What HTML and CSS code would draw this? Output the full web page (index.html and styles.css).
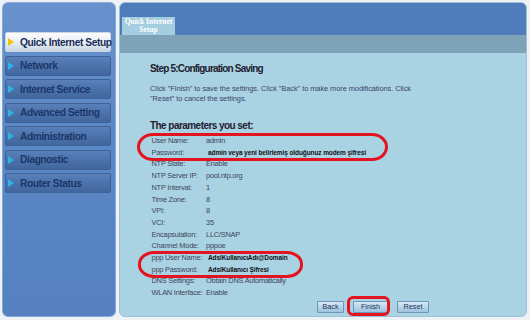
FILE: index.html
```html
<!DOCTYPE html>
<html>
<head>
<meta charset="utf-8">
<link rel="stylesheet" href="styles.css">
</head>
<body>
<div class="page">
  <nav class="sidebar">
    <ul class="menu">
      <li class="item active"><span class="arrow"></span>Quick Internet Setup</li>
      <li class="item"><span class="arrow"></span>Network</li>
      <li class="item"><span class="arrow"></span>Internet Service</li>
      <li class="item"><span class="arrow"></span>Advanced Setting</li>
      <li class="item"><span class="arrow"></span>Administration</li>
      <li class="item"><span class="arrow"></span>Diagnostic</li>
      <li class="item"><span class="arrow"></span>Router Status</li>
    </ul>
  </nav>
  <main class="panel">
    <div class="panel-head">
      <div class="tab">Quick Internet<br>Setup</div>
    </div>
    <div class="band"></div>
    <div class="content">
      <h1 class="title">Step 5:Configuration Saving</h1>
      <p class="intro">Click "Finish" to save the settings. Click "Back" to make more modifications. Click<br>"Reset" to cancel the settings.</p>
      <h2 class="subtitle">The parameters you set:</h2>
      <div class="params">
        <div class="row"><span class="label">User Name:</span><span class="value">admin</span></div>
        <div class="row"><span class="label">Password:</span><span class="value edit">admin veya yeni belirlemiş olduğunuz modem şifresi</span></div>
        <div class="row"><span class="label">NTP State:</span><span class="value">Enable</span></div>
        <div class="row"><span class="label">NTP Server IP:</span><span class="value">pool.ntp.org</span></div>
        <div class="row"><span class="label">NTP Interval:</span><span class="value">1</span></div>
        <div class="row"><span class="label">Time Zone:</span><span class="value">8</span></div>
        <div class="row"><span class="label">VPI:</span><span class="value">8</span></div>
        <div class="row"><span class="label">VCI:</span><span class="value">35</span></div>
        <div class="row"><span class="label">Encapsulation:</span><span class="value">LLC/SNAP</span></div>
        <div class="row"><span class="label">Channel Mode:</span><span class="value">pppoe</span></div>
        <div class="row"><span class="label">ppp User Name:</span><span class="value edit">AdslKullanıcıAdı@Domain</span></div>
        <div class="row"><span class="label">ppp Password:</span><span class="value edit">AdslKullanıcı Şifresi</span></div>
        <div class="row"><span class="label">DNS Settings:</span><span class="value">Obtain DNS Automatically</span></div>
        <div class="row"><span class="label">WLAN Interface:</span><span class="value">Enable</span></div>
      </div>
      <div class="buttons">
        <button class="btn btn-back">Back</button>
        <button class="btn btn-finish">Finish</button>
        <button class="btn btn-reset">Reset</button>
      </div>
    </div>
    <div class="mark mark-pass"></div>
    <div class="mark mark-ppp"></div>
    <div class="mark mark-finish"></div>
  </main>
</div>
</body>
</html>
```

FILE: styles.css
```css
* { box-sizing: border-box; }

body {
  margin: 0;
  background: #eef2f5;
  font-family: "Liberation Sans", Arial, sans-serif;
}

.page {
  display: flex;
  gap: 3px;
  padding: 2px 3px 3px 2px;
  height: 320px;
}

/* Sidebar */
.sidebar {
  width: 114px;
  border-radius: 6px;
  border: 1px solid #86aad8;
  background: linear-gradient(180deg, #6792cd 0%, #5a87c5 40%, #5581c0 100%);
  padding: 29px 4px 0 2px;
}

.menu {
  list-style: none;
  margin: 0;
  padding: 0;
  display: flex;
  flex-direction: column;
  gap: 3.5px;
}

.item {
  height: 20px;
  display: flex;
  align-items: center;
  gap: 6px;
  padding-left: 2px;
  border-radius: 2px;
  border: 1px solid #3e6197;
  background: linear-gradient(180deg, #5a80ba 0%, #4b72aa 50%, #42679e 100%);
  color: #1b376a;
  font-weight: bold;
  font-size: 10.2px;
  letter-spacing: -0.4px;
  white-space: nowrap;
}

.item.active {
  border-color: #c9d6e4;
  background: linear-gradient(180deg, #fbfcfd 0%, #e6edf4 55%, #c8d5e3 100%);
  color: #1a2d58;
}

.arrow {
  flex: none;
  width: 0;
  height: 0;
  border-top: 4.5px solid transparent;
  border-bottom: 4.5px solid transparent;
  border-left: 6px solid #2fb3ea;
}

.item.active .arrow {
  border-left-color: #f2c500;
}

/* Main panel */
.panel {
  flex: 1;
  position: relative;
  display: flex;
  flex-direction: column;
  border-radius: 6px;
  border: 1px solid #9dc1d6;
  background: #a9d3e3;
  overflow: hidden;
}

.panel-head {
  height: 32px;
  background: #4f7cbb;
  display: flex;
  align-items: flex-end;
  padding-left: 2px;
}

.tab {
  width: 53px;
  height: 18px;
  background: #a4cde0;
  color: #ffffff;
  font-family: "Liberation Serif", "Times New Roman", serif;
  font-weight: bold;
  font-size: 7.5px;
  line-height: 8px;
  text-align: center;
  padding-top: 1px;
}

.band {
  height: 18px;
  background: #7ea2b7;
}

.content {
  padding: 10px 0 0 30px;
  color: #3c3f58;
}

.title {
  margin: 0;
  font-size: 10px;
  letter-spacing: -0.8px;
  line-height: 12px;
  font-weight: bold;
  color: #1e2131;
}

.intro {
  margin: 9px 0 0 0;
  font-size: 7.4px;
  letter-spacing: -0.05px;
  line-height: 10px;
  color: #3d3f6a;
}

.subtitle {
  margin: 16px 0 0 0;
  font-size: 10px;
  letter-spacing: -0.55px;
  line-height: 12px;
  font-weight: bold;
  color: #1e2131;
}

.params {
  margin-top: 3px;
  padding-left: 1.5px;
}

.row {
  display: grid;
  grid-template-columns: 54.5px 1fr;
  font-size: 7.4px;
  letter-spacing: -0.22px;
  line-height: 11.7px;
  color: #40435a;
  white-space: nowrap;
}

.value.edit {
  font-weight: bold;
  font-size: 6.5px;
  letter-spacing: -0.1px;
  color: #101015;
  padding-left: 2px;
}

.buttons {
  display: flex;
  gap: 9px;
  margin: 2px 0 0 167px;
}

.btn {
  height: 12px;
  padding: 0 2px;
  border: 1px solid #7195b9;
  border-radius: 1px;
  background: linear-gradient(180deg, #d8eaf6 0%, #b5d2e8 55%, #9fc2de 100%);
  color: #22345a;
  font-family: "Liberation Sans", Arial, sans-serif;
  font-size: 7.2px;
  line-height: 10px;
}

.btn-back { width: 27px; }
.btn-finish { width: 35px; }
.btn-reset { width: 32px; }

/* Red annotation marks drawn over the screenshot */
.mark {
  position: absolute;
  border: 3px solid #e3141f;
}

.mark-pass {
  left: 17px;
  top: 130px;
  width: 251px;
  height: 28px;
  border-radius: 16px / 14px;
}

.mark-ppp {
  left: 18px;
  top: 248px;
  width: 165px;
  height: 27px;
  border-radius: 16px / 13px;
}

.mark-finish {
  left: 227px;
  top: 293px;
  width: 43px;
  height: 20px;
  border-radius: 6px;
}
```
